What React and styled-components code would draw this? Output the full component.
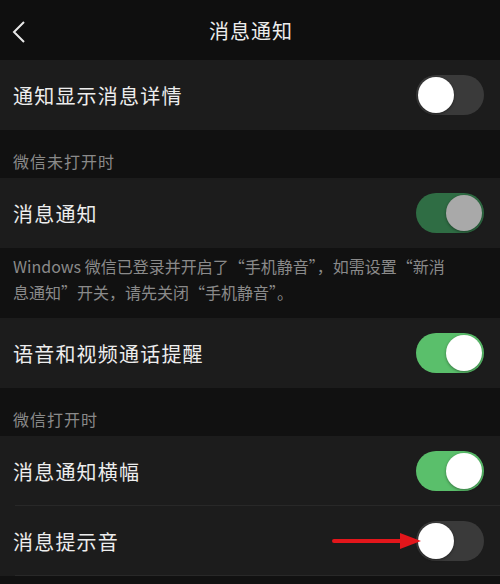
import React from 'react';
import styled, { createGlobalStyle } from 'styled-components';

const GlobalStyle = createGlobalStyle`
  html, body {
    margin: 0;
    padding: 0;
    background: #111111;
  }
  body {
    font-family: "Noto Sans CJK SC", "Noto Sans", sans-serif;
  }
`;

const rows = [
  { type: 'row', label: '通知显示消息详情', state: 'off' },
  { type: 'section', label: '微信未打开时' },
  { type: 'row', label: '消息通知', state: 'dim' },
  {
    type: 'note',
    lines: [
      'Windows 微信已登录并开启了“手机静音”，如需设置“新消',
      '息通知”开关，请先关闭“手机静音”。',
    ],
  },
  { type: 'row', label: '语音和视频通话提醒', state: 'on' },
  { type: 'section', label: '微信打开时' },
  { type: 'row', label: '消息通知横幅', state: 'on', divider: true },
  { type: 'row', label: '消息提示音', state: 'off', divider: true, arrow: true },
];

const Back = () => (
  <svg width="14" height="22" viewBox="0 0 14 22">
    <path d="M12 1 L2 11 L12 21" fill="none" stroke="#e8e8e8" strokeWidth="2" />
  </svg>
);

const Arrow = () => (
  <svg width="90" height="20" viewBox="0 0 90 20">
    <path d="M2 10 L72 10" stroke="#e3161b" strokeWidth="4" strokeLinecap="round" />
    <path d="M68 2 L89 10 L68 18 Z" fill="#e3161b" />
  </svg>
);

export default function App() {
  return (
    <Page>
      <GlobalStyle />
      <Header>
        <BackButton><Back /></BackButton>
        <Title>消息通知</Title>
      </Header>
      {rows.map((r, i) => {
        if (r.type === 'section') return <Section key={i}>{r.label}</Section>;
        if (r.type === 'note')
          return (
            <Note key={i}>
              {r.lines.map((l, j) => <NoteLine key={j}>{l}</NoteLine>)}
            </Note>
          );
        return (
          <Row key={i} $divider={r.divider}>
            <Label>{r.label}</Label>
            <SwitchWrap>
              {r.arrow && <ArrowBox><Arrow /></ArrowBox>}
              <Track $state={r.state}>
                <Knob $state={r.state} />
              </Track>
            </SwitchWrap>
          </Row>
        );
      })}
    </Page>
  );
}

const Page = styled.div`
  width: 500px;
  height: 584px;
  overflow: hidden;
  background: #111111;
`;

const Header = styled.div`
  position: relative;
  height: 60px;
  display: flex;
  align-items: center;
  justify-content: center;
  background: #0f0f0f;
`;

const BackButton = styled.div`
  position: absolute;
  left: 12px;
  top: 21px;
  display: flex;
`;

const Title = styled.div`
  color: #ececec;
  font-size: 20px;
  letter-spacing: 1px;
  margin-left: 2px;
`;

const Row = styled.div`
  position: relative;
  height: 70px;
  display: flex;
  align-items: center;
  justify-content: space-between;
  padding: 0 16px 0 13px;
  background: #1c1c1c;

  &::after {
    content: '';
    display: ${p => (p.$divider ? 'block' : 'none')};
    position: absolute;
    left: 15px;
    right: 0;
    bottom: 0;
    height: 1px;
    background: #282828;
  }
`;

const Label = styled.div`
  color: #ededed;
  font-size: 20px;
  letter-spacing: 1.2px;
`;

const SwitchWrap = styled.div`
  position: relative;
  display: flex;
  align-items: center;
`;

const ArrowBox = styled.div`
  position: absolute;
  right: 62px;
  top: 50%;
  transform: translateY(-50%);
  display: flex;
`;

const trackColors = { off: '#3a3a3a', dim: '#2f6d44', on: '#5abf6b' };
const knobColors = { off: '#ffffff', dim: '#a9a9a9', on: '#ffffff' };

const Track = styled.div`
  width: 68px;
  height: 40px;
  border-radius: 20px;
  background: ${p => trackColors[p.$state]};
  padding: 2px;
  box-sizing: border-box;
  display: flex;
  justify-content: ${p => (p.$state === 'off' ? 'flex-start' : 'flex-end')};
`;

const Knob = styled.div`
  width: 36px;
  height: 36px;
  border-radius: 50%;
  background: ${p => knobColors[p.$state]};
  box-shadow: 0 1px 3px rgba(0, 0, 0, 0.4);
`;

const Section = styled.div`
  height: 48px;
  display: flex;
  align-items: flex-end;
  padding: 0 13px 5px;
  box-sizing: border-box;
  color: #8a8a8a;
  font-size: 16px;
  letter-spacing: 1px;
  background: #111111;
`;

const Note = styled.div`
  height: 70px;
  padding: 5px 13px 0;
  box-sizing: border-box;
  color: #8a8a8a;
  font-size: 16px;
  line-height: 26px;
  background: #111111;
`;

const NoteLine = styled.div`
  white-space: nowrap;
`;
